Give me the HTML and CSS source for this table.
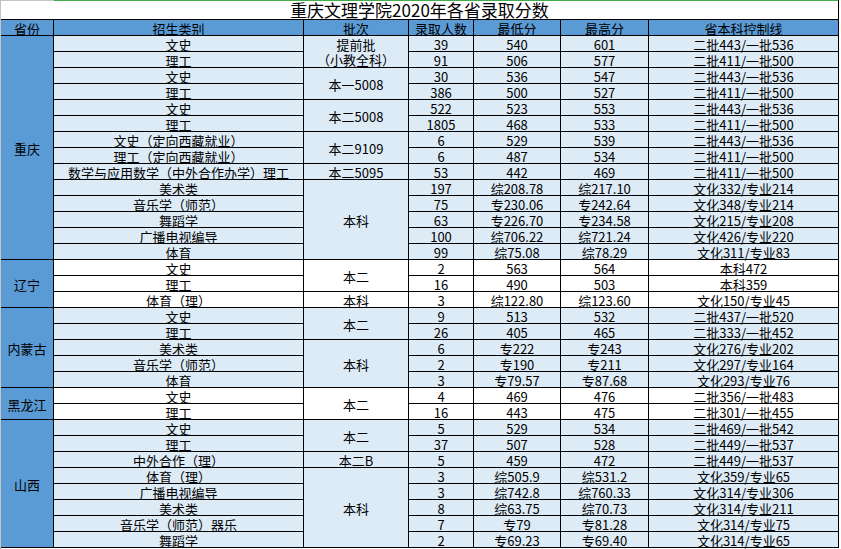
FILE: index.html
```html
<!DOCTYPE html>
<html lang="zh-CN">
<head>
<meta charset="utf-8">
<title>重庆文理学院2020年各省录取分数</title>
<link rel="stylesheet" href="styles.css">
</head>
<body>
<div class="sheet">
  <div class="topline"><span class="corner"></span><span class="sel"></span></div>
  <div class="title">重庆文理学院2020年各省录取分数</div>

  <div class="grid head">
    <div class="c">省份</div><div class="c">招生类别</div><div class="c">批次</div><div class="c">录取人数</div><div class="c">最低分</div><div class="c">最高分</div><div class="c">省本科控制线</div>
  </div>

  <div class="grid light">
    <div class="c prov r14">重庆</div>
    <div class="c">文史</div><div class="c r2 two">提前批<br>（小教全科）</div><div class="c">39</div><div class="c">540</div><div class="c">601</div><div class="c">二批443/一批536</div>
    <div class="c">理工</div><div class="c">91</div><div class="c">506</div><div class="c">577</div><div class="c">二批411/一批500</div>
    <div class="c">文史</div><div class="c r2">本一5008</div><div class="c">30</div><div class="c">536</div><div class="c">547</div><div class="c">二批443/一批536</div>
    <div class="c">理工</div><div class="c">386</div><div class="c">500</div><div class="c">527</div><div class="c">二批411/一批500</div>
    <div class="c">文史</div><div class="c r2">本二5008</div><div class="c">522</div><div class="c">523</div><div class="c">553</div><div class="c">二批443/一批536</div>
    <div class="c">理工</div><div class="c">1805</div><div class="c">468</div><div class="c">533</div><div class="c">二批411/一批500</div>
    <div class="c">文史（定向西藏就业）</div><div class="c r2">本二9109</div><div class="c">6</div><div class="c">529</div><div class="c">539</div><div class="c">二批443/一批536</div>
    <div class="c">理工（定向西藏就业）</div><div class="c">6</div><div class="c">487</div><div class="c">534</div><div class="c">二批411/一批500</div>
    <div class="c">数学与应用数学（中外合作办学）理工</div><div class="c">本二5095</div><div class="c">53</div><div class="c">442</div><div class="c">469</div><div class="c">二批411/一批500</div>
    <div class="c">美术类</div><div class="c r5">本科</div><div class="c">197</div><div class="c">综208.78</div><div class="c">综217.10</div><div class="c">文化332/专业214</div>
    <div class="c">音乐学（师范）</div><div class="c">75</div><div class="c">专230.06</div><div class="c">专242.64</div><div class="c">文化348/专业214</div>
    <div class="c">舞蹈学</div><div class="c">63</div><div class="c">专226.70</div><div class="c">专234.58</div><div class="c">文化215/专业208</div>
    <div class="c">广播电视编导</div><div class="c">100</div><div class="c">综706.22</div><div class="c">综721.24</div><div class="c">文化426/专业220</div>
    <div class="c">体育</div><div class="c">99</div><div class="c">综75.08</div><div class="c">综78.29</div><div class="c">文化311/专业83</div>
  </div>

  <div class="grid white">
    <div class="c prov r3">辽宁</div>
    <div class="c">文史</div><div class="c r2">本二</div><div class="c">2</div><div class="c">563</div><div class="c">564</div><div class="c">本科472</div>
    <div class="c">理工</div><div class="c">16</div><div class="c">490</div><div class="c">503</div><div class="c">本科359</div>
    <div class="c">体育（理）</div><div class="c">本科</div><div class="c">3</div><div class="c">综122.80</div><div class="c">综123.60</div><div class="c">文化150/专业45</div>
  </div>

  <div class="grid light">
    <div class="c prov r5">内蒙古</div>
    <div class="c">文史</div><div class="c r2">本二</div><div class="c">9</div><div class="c">513</div><div class="c">532</div><div class="c">二批437/一批520</div>
    <div class="c">理工</div><div class="c">26</div><div class="c">405</div><div class="c">465</div><div class="c">二批333/一批452</div>
    <div class="c">美术类</div><div class="c r3">本科</div><div class="c">6</div><div class="c">专222</div><div class="c">专243</div><div class="c">文化276/专业202</div>
    <div class="c">音乐学（师范）</div><div class="c">2</div><div class="c">专190</div><div class="c">专211</div><div class="c">文化297/专业164</div>
    <div class="c">体育</div><div class="c">3</div><div class="c">专79.57</div><div class="c">专87.68</div><div class="c">文化293/专业76</div>
  </div>

  <div class="grid white">
    <div class="c prov r2">黑龙江</div>
    <div class="c">文史</div><div class="c r2">本二</div><div class="c">4</div><div class="c">469</div><div class="c">476</div><div class="c">二批356/一批483</div>
    <div class="c">理工</div><div class="c">16</div><div class="c">443</div><div class="c">475</div><div class="c">二批301/一批455</div>
  </div>

  <div class="grid light">
    <div class="c prov r8">山西</div>
    <div class="c">文史</div><div class="c r2">本二</div><div class="c">5</div><div class="c">529</div><div class="c">534</div><div class="c">二批469/一批542</div>
    <div class="c">理工</div><div class="c">37</div><div class="c">507</div><div class="c">528</div><div class="c">二批449/一批537</div>
    <div class="c">中外合作（理）</div><div class="c">本二B</div><div class="c">5</div><div class="c">459</div><div class="c">472</div><div class="c">二批449/一批537</div>
    <div class="c">体育（理）</div><div class="c r5">本科</div><div class="c">3</div><div class="c">综505.9</div><div class="c">综531.2</div><div class="c">文化359/专业65</div>
    <div class="c">广播电视编导</div><div class="c">3</div><div class="c">综742.8</div><div class="c">综760.33</div><div class="c">文化314/专业306</div>
    <div class="c">美术类</div><div class="c">8</div><div class="c">综63.75</div><div class="c">综70.73</div><div class="c">文化314/专业211</div>
    <div class="c">音乐学（师范）器乐</div><div class="c">7</div><div class="c">专79</div><div class="c">专81.28</div><div class="c">文化314/专业75</div>
    <div class="c">舞蹈学</div><div class="c">2</div><div class="c">专69.23</div><div class="c">专69.40</div><div class="c">文化314/专业65</div>
  </div>
</div>
</body>
</html>
```

FILE: styles.css
```css
* {
  box-sizing: border-box;
}

html, body {
  margin: 0;
  padding: 0;
  background: #ffffff;
}

body {
  font-family: "Noto Sans CJK SC", "Noto Sans", sans-serif;
  font-size: 13px;
  color: #000000;
}

.sheet {
  width: 839px;
  min-height: 549px;
  border-left: 1px solid #c3c3c3;
}

.topline {
  display: flex;
  height: 1px;
  border-right: 1px solid #000000;
}

.corner {
  width: 53px;
  background: #c3c3c3;
}

.sel {
  flex: 1;
  background: #3fae49;
}

.title {
  display: flex;
  align-items: flex-end;
  justify-content: center;
  height: 18px;
  padding-bottom: 1px;
  font-size: 17px;
  line-height: 17px;
  border-right: 1px solid #000000;
  white-space: nowrap;
}

.grid {
  display: grid;
  grid-template-columns: 53px 250px 105px 65px 87px 88px 190px;
  grid-auto-rows: 16px;
}

.head {
  border-top: 1px solid #000000;
  background: #5b9bd5;
}

.light {
  background: #ddebf7;
}

.white {
  background: #ffffff;
}

.c {
  display: flex;
  align-items: center;
  justify-content: center;
  border-right: 1px solid #000000;
  border-bottom: 1px solid #000000;
  line-height: 13px;
  padding-top: 2px;
  white-space: nowrap;
  text-align: center;
}

.prov {
  background: #5b9bd5;
}

.two {
  line-height: 15px;
  padding-top: 1px;
}

.r2 { grid-row: span 2; }
.r3 { grid-row: span 3; }
.r5 { grid-row: span 5; }
.r8 { grid-row: span 8; }
.r14 { grid-row: span 14; }
```
